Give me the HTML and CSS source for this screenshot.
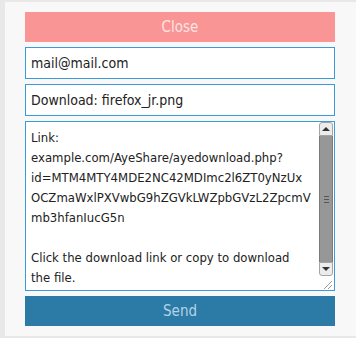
FILE: index.html
```html
<!DOCTYPE html>
<html lang="en">
<head>
  <meta charset="UTF-8">
  <title>AyeShare - Send Link</title>
  <link rel="stylesheet" href="styles.css">
</head>
<body>
  <div class="panel">
    <button class="btn btn-close">Close</button>
    <div class="field">mail@mail.com</div>
    <div class="field">Download: firefox_jr.png</div>
    <div class="message">
      <div class="message-text">Link:
example.com/AyeShare/ayedownload.php?
id=MTM4MTY4MDE2NC42MDImc2l6ZT0yNzUx
OCZmaWxlPXVwbG9hZGVkLWZpbGVzL2ZpcmV
mb3hfanIucG5n

Click the download link or copy to download
the file.</div>
      <div class="scrollbar">
        <div class="sb-btn sb-up"><span class="arrow-up"></span></div>
        <div class="sb-thumb"><span class="grip"></span></div>
        <div class="sb-btn sb-down"><span class="arrow-down"></span></div>
        <div class="resizer">
          <svg width="14" height="14" viewBox="0 0 14 14">
            <line x1="5" y1="13" x2="13" y2="5" stroke="#9a9a9a" stroke-width="1"/>
            <line x1="9" y1="13" x2="13" y2="9" stroke="#9a9a9a" stroke-width="1"/>
          </svg>
        </div>
      </div>
    </div>
    <button class="btn btn-send">Send</button>
  </div>
</body>
</html>
```

FILE: styles.css
```css
body {
  margin: 0;
  background: #e8e8e8;
  font-family: "DejaVu Sans", sans-serif;
  font-stretch: condensed;
}
.panel {
  margin: 2px 0 0 5px;
  height: 334px;
  box-sizing: border-box;
  padding: 10px 21px 0 20px;
  background: #f8f8f8;
  display: flex;
  flex-direction: column;
  gap: 5px;
}
.btn {
  height: 30px;
  border: none;
  font-family: inherit;
  font-stretch: condensed;
  font-size: 15px;
  padding: 0;
}
.btn-close {
  background: #f99595;
  color: #fde3e3;
}
.btn-send {
  background: #2c7ba6;
  color: #b3d3e6;
}
.field {
  height: 32px;
  box-sizing: border-box;
  border: 1px solid #3b9bd8;
  background: #fff;
  padding: 0 5px;
  display: flex;
  align-items: center;
  font-size: 14px;
  color: #222;
}
.message {
  height: 170px;
  box-sizing: border-box;
  border: 1px solid #3b9bd8;
  background: #fff;
  display: flex;
}
.message-text {
  flex: 1;
  padding: 6px 5px 0;
  font-size: 13px;
  line-height: 20px;
  color: #222;
  white-space: pre;
  overflow: hidden;
}
.scrollbar {
  width: 14px;
  margin-right: 1px;
  display: flex;
  flex-direction: column;
}
.sb-btn {
  height: 14px;
  box-sizing: border-box;
  background: #ececec;
  border: 1px solid #a4a4a4;
  display: flex;
  align-items: center;
  justify-content: center;
}
.sb-up {
  border-radius: 3px 3px 0 0;
}
.sb-down {
  border-radius: 0 0 3px 3px;
}
.arrow-up {
  border-left: 4px solid transparent;
  border-right: 4px solid transparent;
  border-bottom: 4px solid #333;
}
.arrow-down {
  border-left: 4px solid transparent;
  border-right: 4px solid transparent;
  border-top: 4px solid #333;
}
.sb-thumb {
  flex: 1;
  background: #979797;
  border-left: 1px solid #7a7a7a;
  border-right: 1px solid #7a7a7a;
  display: flex;
  align-items: center;
  justify-content: center;
}
.grip {
  width: 5px;
  height: 7px;
  background: linear-gradient(#555 0 1px, transparent 1px 3px, #555 3px 4px, transparent 4px 6px, #555 6px 7px);
}
.resizer {
  height: 14px;
  background: #fff;
}
.resizer svg {
  display: block;
}
```
